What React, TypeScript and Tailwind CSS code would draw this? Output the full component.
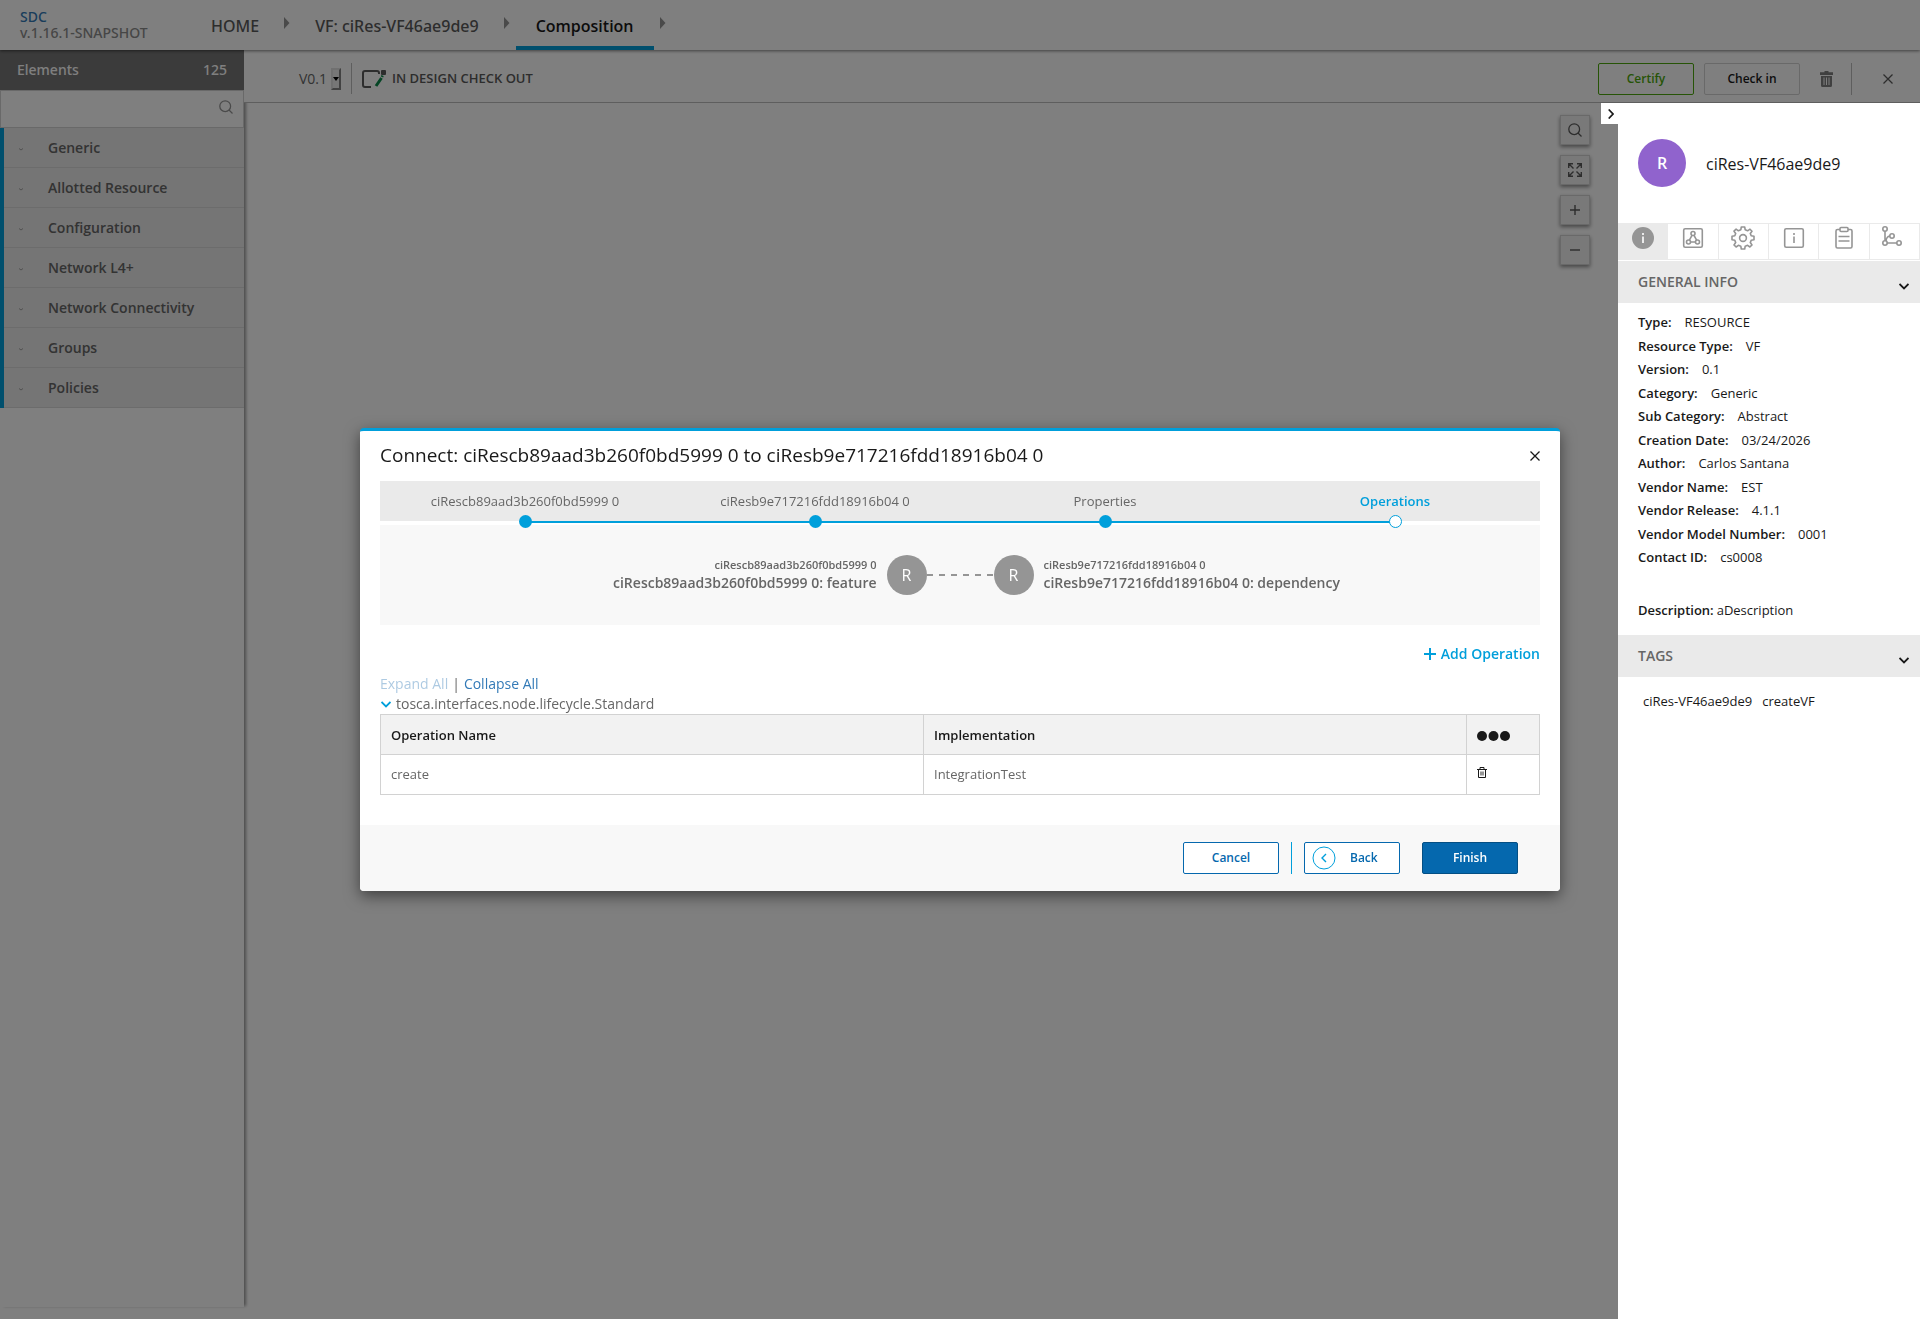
import React from "react";

const categories = ["Generic", "Allotted Resource", "Configuration", "Network L4+", "Network Connectivity", "Groups", "Policies"];

const info: [string, string][] = [
  ["Type:", "RESOURCE"],
  ["Resource Type:", "VF"],
  ["Version:", "0.1"],
  ["Category:", "Generic"],
  ["Sub Category:", "Abstract"],
  ["Creation Date:", "03/24/2026"],
  ["Author:", "Carlos Santana"],
  ["Vendor Name:", "EST"],
  ["Vendor Release:", "4.1.1"],
  ["Vendor Model Number:", "0001"],
  ["Contact ID:", "cs0008"],
];

function Arrow() {
  return (
    <svg width="6" height="12" viewBox="0 0 6 12" className="mb-1" aria-hidden="true">
      <path d="M0 0L5.5 6L0 12Z" fill="#959595" />
    </svg>
  );
}

function SearchIcon({ size }: { size: number }) {
  return (
    <svg width={size} height={size} viewBox="0 0 14 14" fill="none" stroke="currentColor" strokeWidth="1.3" aria-hidden="true">
      <circle cx="6.2" cy="6.2" r="5.4" />
      <path d="M10 10L13.5 13.5" />
    </svg>
  );
}

function Cross({ size }: { size: number }) {
  return (
    <svg width={size} height={size} viewBox="0 0 10 10" fill="none" stroke="currentColor" strokeWidth="1.3" aria-hidden="true">
      <path d="M0.5 0.5L9.5 9.5M9.5 0.5L0.5 9.5" />
    </svg>
  );
}

function Header() {
  return (
    <header className="relative z-10 flex h-[50px] items-stretch bg-white shadow-[0_1px_3px_rgba(0,0,0,0.5)]">
      <div className="flex w-[211px] flex-col justify-center pl-5 font-['Noto_Sans',sans-serif] text-sm leading-4 font-medium">
        <a href="#sdc" className="block text-[#337ab7]">SDC</a>
        <span className="text-[#8c8c8c]">v.1.16.1-SNAPSHOT</span>
      </div>
      <nav className="flex items-center font-['Noto_Sans',sans-serif] text-base font-medium text-[#5a5a5a]" aria-label="Breadcrumb">
        <a href="#home" className="mr-[25px] pt-0.5">HOME</a>
        <Arrow />
        <a href="#vf" className="mr-[25px] ml-[25px] pt-0.5">VF: ciRes-VF46ae9de9</a>
        <Arrow />
        <a href="#composition" className="mx-[6px] flex h-[50px] items-center border-b-4 border-[#009fdb] px-5 pt-[6px] font-['Open_Sans',sans-serif] font-semibold text-[#191919]">Composition</a>
        <Arrow />
      </nav>
    </header>
  );
}

function Palette() {
  return (
    <aside className="mb-3 w-[244px] shrink-0 bg-white shadow-[3px_0_3px_-1px_rgba(0,0,0,0.4)]">
      <h2 className="flex h-10 items-center justify-between bg-[#777] px-[17px] font-['Noto_Sans',sans-serif] text-sm font-medium text-white">
        <span>Elements</span>
        <span>125</span>
      </h2>
      <div className="flex h-[38px] items-center border border-[#d2d2d2] pr-[10px] text-[#959595]">
        <input type="search" aria-label="Search elements" className="h-full min-w-0 flex-1 px-3 outline-none" />
        <span className="pb-1"><SearchIcon size={14} /></span>
      </div>
      <ul className="border-l-4 border-[#009fdb]">
        {categories.map((c) => (
          <li key={c} className="h-10 border-b border-[#d8d8d8] bg-[#eaeaea]">
            <button className="flex h-full w-full items-center text-left text-sm font-semibold text-[#666]">
              <svg width="4" height="3" viewBox="0 0 4 3" className="mt-1 mr-[25px] ml-[15px]" aria-hidden="true">
                <path d="M0 0.5L2 2L4 0.5" fill="none" stroke="#a0a0a0" />
              </svg>
              {c}
            </button>
          </li>
        ))}
      </ul>
    </aside>
  );
}

function VersionBar() {
  return (
    <div className="flex h-[53px] items-center border-b border-[#bcbcbc] bg-white pt-[5px] pr-[27px] pl-[55px]">
      <label htmlFor="version" className="text-sm text-[#666]">V0.1</label>
      <div className="relative ml-[4px] h-[22px] w-[10px]">
        <select id="version" className="h-full w-full appearance-none border-2 border-t-[#e0e0e0] border-r-[#858585] border-b-[#858585] border-l-[#e0e0e0] bg-[#efefef]">
          <option aria-label="V0.1" />
        </select>
        <svg width="6" height="4" viewBox="0 0 6 4" className="pointer-events-none absolute top-[9px] left-[2px]" aria-hidden="true">
          <path d="M0 0H6L3 4Z" />
        </svg>
      </div>
      <div className="mr-[10px] ml-[10px] h-[31px] w-px bg-[#bcbcbc]" />
      <svg width="24" height="18" viewBox="0 0 24 18" fill="none" aria-hidden="true">
        <path d="M17 4V3Q17 1 15 1H3Q1 1 1 3V15Q1 17 3 17H9" stroke="#5a5a5a" strokeWidth="2" />
        <rect x="19" y="0" width="5" height="5" rx="1" fill="#5a5a5a" />
        <path d="M19.5 8L14 16" stroke="#0a8a4a" strokeWidth="3" />
        <path d="M20.5 5.5L20 7" stroke="#0a8a4a" strokeWidth="2.5" />
      </svg>
      <span className="ml-[6px] text-[13px] font-semibold text-[#5a5a5a]">IN DESIGN CHECK OUT</span>
      <div className="ml-auto flex items-center text-xs font-semibold">
        <button className="h-8 w-24 rounded-xs border border-[#4ca90c] text-[#4ca90c]">Certify</button>
        <button className="ml-[10px] h-8 w-24 rounded-xs border border-[#d2d2d2] text-[#191919]">Check in</button>
        <button aria-label="Delete" className="ml-5">
          <svg width="13" height="16" viewBox="0 0 13 16" fill="#808080" aria-hidden="true">
            <path d="M4.5 0H8.5V1.2H13V4H0V1.2H4.5ZM1 5H12V14.5Q12 16 10.5 16H2.5Q1 16 1 14.5Z" />
            <path d="M4 6.5V14M6.5 6.5V14M9 6.5V14" stroke="#fff" />
          </svg>
        </button>
        <div className="mr-[31px] ml-[18px] h-8 w-px bg-[#bcbcbc]" />
        <button aria-label="Close" className="text-[#5a5a5a]"><Cross size={10} /></button>
      </div>
    </div>
  );
}

function CanvasTools() {
  const box = "flex size-[30px] items-center justify-center border border-[#d2d2d2] bg-[#f2f2f2] text-[#5a5a5a] shadow-[0_2px_4px_rgba(0,0,0,0.45)]";
  return (
    <div className="flex flex-col gap-[10px]">
      <button aria-label="Search" className={box}><SearchIcon size={14} /></button>
      <button aria-label="Fit to screen" className={box}>
        <svg width="14" height="14" viewBox="0 0 14 14" fill="none" stroke="currentColor" strokeWidth="1.4" aria-hidden="true">
          <path d="M0.7 5V0.7H5M9 0.7H13.3V5M13.3 9V13.3H9M5 13.3H0.7V9M1 1L5.5 5.5M13 1L8.5 5.5M13 13L8.5 8.5M1 13L5.5 8.5" />
        </svg>
      </button>
      <button aria-label="Zoom in" className={box}>
        <svg width="10" height="10" viewBox="0 0 10 10" stroke="currentColor" strokeWidth="1.4" aria-hidden="true"><path d="M0 5H10M5 0V10" /></svg>
      </button>
      <button aria-label="Zoom out" className={box}>
        <svg width="10" height="10" viewBox="0 0 10 10" stroke="currentColor" strokeWidth="1.4" aria-hidden="true"><path d="M0 5H10" /></svg>
      </button>
    </div>
  );
}

function Chevron({ className }: { className: string }) {
  return (
    <svg width="10" height="7" viewBox="0 0 10 7" fill="none" stroke="currentColor" strokeWidth="1.8" className={className} aria-hidden="true">
      <path d="M0.5 1L5 5.5L9.5 1" />
    </svg>
  );
}

const tabIcons: { name: string; art: React.ReactNode }[] = [
  {
    name: "General info",
    art: (
      <>
        <circle cx="12" cy="12" r="11" fill="#959595" stroke="none" />
        <path d="M12 10.5V17M12 7V9" stroke="#eaeaea" strokeWidth="2" />
      </>
    ),
  },
  {
    name: "Composition",
    art: (
      <>
        <rect x="2.7" y="2.7" width="18.6" height="18.6" rx="1.5" />
        <circle cx="12" cy="7.5" r="2" />
        <circle cx="7.5" cy="16" r="2" />
        <circle cx="16.5" cy="16" r="2" />
        <path d="M11 9.3L8.4 14.2M13 9.3L15.6 14.2M9.5 16H14.5" />
      </>
    ),
  },
  {
    name: "Inputs",
    art: (
      <>
        <path d="M10.3 1H13.7L14.2 3.8L16.6 4.8L19 3.2L21 5.2L19.3 7.5L20.2 9.8L23 10.3V13.7L20.2 14.2L19.3 16.6L21 18.9L18.9 21L16.6 19.3L14.2 20.2L13.7 23H10.3L9.8 20.2L7.4 19.3L5.1 21L3 18.9L4.7 16.6L3.8 14.2L1 13.7V10.3L3.8 9.8L4.7 7.5L3 5.2L5.1 3.2L7.4 4.8L9.8 3.8Z" strokeLinejoin="round" />
        <circle cx="12" cy="12" r="3.4" />
      </>
    ),
  },
  {
    name: "Information artifacts",
    art: (
      <>
        <rect x="2.7" y="2.7" width="18.6" height="18.6" rx="1.5" />
        <path d="M12 10.5V17M12 7V9" />
      </>
    ),
  },
  {
    name: "Deployment artifacts",
    art: (
      <>
        <path d="M8 3.5H5.5Q4 3.5 4 5V20.5Q4 22 5.5 22H18.5Q20 22 20 20.5V5Q20 3.5 18.5 3.5H16" />
        <rect x="8" y="1.5" width="8" height="4" rx="1" />
        <path d="M6.5 10.5H17.5M6.5 15H17.5" />
      </>
    ),
  },
  {
    name: "Relations",
    art: (
      <>
        <circle cx="3" cy="3" r="2.2" />
        <circle cx="3" cy="17" r="2.2" />
        <circle cx="10" cy="10" r="2.2" />
        <circle cx="17" cy="17" r="2.2" />
        <path d="M3 5.2V14.8M5.2 17H14.8M4 15Q4.5 10.5 7.8 10" />
      </>
    ),
  },
];

function SectionTitle({ children }: { children: string }) {
  return (
    <h3 className="bg-[#eaeaea]">
      <button className="flex h-[42px] w-full items-center justify-between pr-[11px] pl-5 text-sm font-semibold text-[#666]">
        {children}
        <Chevron className="mt-2 text-[#191919]" />
      </button>
    </h3>
  );
}

function DetailsPanel() {
  return (
    <div className="relative z-20 w-[302px] shrink-0 bg-white text-[13px] text-[#191919]">
      <button aria-label="Collapse panel" className="absolute top-0 right-full flex h-[21px] w-[17px] items-center justify-center bg-white pl-[2px]">
        <svg width="6" height="10" viewBox="0 0 6 10" fill="none" stroke="#191919" strokeWidth="1.7" aria-hidden="true"><path d="M0.7 0.5L5 5L0.7 9.5" /></svg>
      </button>
      <div className="flex h-[120px] items-center gap-5 pl-5">
        <span className="flex size-12 items-center justify-center rounded-full bg-[#9063cd] text-base font-semibold text-white">R</span>
        <h2 className="pt-0.5 text-base">ciRes-VF46ae9de9</h2>
      </div>
      <div className="mb-px grid h-[37px] grid-cols-6 border-t border-b border-[#eaeaea]" role="tablist">
        {tabIcons.map((t, i) => (
          <button key={t.name} role="tab" aria-selected={i === 0} aria-label={t.name} className={i === 0 ? "flex justify-center border-r border-[#eaeaea] bg-[#eaeaea] pt-[2px]" : "flex justify-center border-r border-[#eaeaea] pt-[2px]"}>
            <svg width="24" height="24" viewBox="0 0 24 24" fill="none" stroke="#959595" strokeWidth="1.6" aria-hidden="true">{t.art}</svg>
          </button>
        ))}
      </div>
      <SectionTitle>GENERAL INFO</SectionTitle>
      <dl className="px-5 pt-2">
        <div className="grid h-[259px] auto-rows-fr">
          {info.map(([k, v]) => (
            <div key={k} className="flex items-center gap-[13px]">
              <dt className="font-semibold">{k}</dt>
              <dd>{v}</dd>
            </div>
          ))}
        </div>
        <div className="mt-[31px] mb-[14px] flex h-5 items-center gap-[3px]">
          <dt className="font-semibold">Description:</dt>
          <dd>aDescription</dd>
        </div>
      </dl>
      <SectionTitle>TAGS</SectionTitle>
      <div className="flex gap-[10px] px-[25px] pt-[15px]">
        <span>ciRes-VF46ae9de9</span>
        <span>createVF</span>
      </div>
    </div>
  );
}

function Steps() {
  const steps = ["ciRescb89aad3b260f0bd5999 0", "ciResb9e717216fdd18916b04 0", "Properties", "Operations"];
  return (
    <ol className="grid grid-cols-4 border-b-4 border-white bg-[#eaeaea] text-[13px]">
      {steps.map((s, i) => (
        <li key={s} className={i === 3 ? "relative h-10 pt-[11px] text-center font-semibold text-[#009fdb]" : "relative h-10 pt-[11px] text-center text-[#666]"}>
          {s}
          {i < 3 && <span className="absolute top-10 left-1/2 h-[2px] w-full bg-[#009fdb]" />}
          <span className={i === 3 ? "absolute top-[34px] left-1/2 z-10 -ml-[6px] size-[13px] rounded-full border border-[#009fdb] bg-white" : "absolute top-[34px] left-1/2 z-10 -ml-[6px] size-[13px] rounded-full bg-[#009fdb]"} />
        </li>
      ))}
    </ol>
  );
}

function Endpoint() {
  return <span className="flex size-10 items-center justify-center rounded-full bg-[#959595] text-base text-white">R</span>;
}

function ConnectDialog() {
  return (
    <div className="fixed inset-0 z-30 flex items-center justify-center">
      <section role="dialog" aria-labelledby="dialog-title" className="w-[1200px] rounded-sm border-t-3 border-[#009fdb] bg-white text-sm text-[#666] shadow-[0_5px_15px_rgba(0,0,0,0.5)]">
        <div className="px-5">
          <div className="flex h-[50px] items-center justify-between">
            <h1 id="dialog-title" className="text-[19px] text-[#191919]">Connect: ciRescb89aad3b260f0bd5999 0 to ciResb9e717216fdd18916b04 0</h1>
            <button aria-label="Close dialog" className="text-[#191919]"><Cross size={10} /></button>
          </div>
          <Steps />
          <div className="grid h-[100px] grid-cols-[1fr_auto_1fr] items-center gap-[10px] bg-[#f8f8f8] font-semibold">
            <div className="text-right">
              <div className="text-[11px] leading-4">ciRescb89aad3b260f0bd5999 0</div>
              <div className="leading-5">ciRescb89aad3b260f0bd5999 0: feature</div>
            </div>
            <div className="flex items-center font-normal">
              <Endpoint />
              <svg width="67" height="2" viewBox="0 0 67 2" aria-hidden="true"><path d="M0 1H67" stroke="#959595" strokeWidth="2" strokeDasharray="6 6" /></svg>
              <Endpoint />
            </div>
            <div>
              <div className="text-[11px] leading-4">ciResb9e717216fdd18916b04 0</div>
              <div className="leading-5">ciResb9e717216fdd18916b04 0: dependency</div>
            </div>
          </div>
          <div className="flex justify-end pt-[19px]">
            <button className="flex items-center gap-[5px] leading-5 font-semibold text-[#009fdb]">
              <svg width="12" height="12" viewBox="0 0 12 12" stroke="currentColor" strokeWidth="2" aria-hidden="true"><path d="M0 6H12M6 0V12" /></svg>
              Add Operation
            </button>
          </div>
          <div className="mt-[10px] flex gap-1 leading-5">
            <a href="#expand" className="text-[#337ab7]/40">Expand All</a>
            <span>|</span>
            <a href="#collapse" className="text-[#337ab7]">Collapse All</a>
          </div>
          <button className="flex items-center gap-[5px] pl-px leading-5">
            <Chevron className="text-[#009fdb]" />
            tosca.interfaces.node.lifecycle.Standard
          </button>
          <table className="w-full table-fixed border-collapse text-left text-[13px] [&_td]:border [&_td]:border-[#d2d2d2] [&_td]:px-[10px] [&_th]:border [&_th]:border-[#d2d2d2] [&_th]:px-[10px] [&_th]:pt-0.5">
            <thead>
              <tr className="h-10 bg-[#f2f2f2] text-[#191919]">
                <th className="font-semibold">Operation Name</th>
                <th className="font-semibold">Implementation</th>
                <th className="w-[73px]" aria-label="Actions">
                  <svg width="34" height="10" viewBox="0 0 34 10" fill="#191919" aria-hidden="true"><circle cx="5" cy="5" r="5" /><circle cx="16.5" cy="5" r="5" /><circle cx="28" cy="5" r="5" /></svg>
                </th>
              </tr>
            </thead>
            <tbody>
              <tr className="h-10">
                <td>create</td>
                <td>IntegrationTest</td>
                <td>
                  <button aria-label="Delete operation" className="mb-1 block">
                    <svg width="10" height="11" viewBox="0 0 10 11" fill="none" stroke="#191919" aria-hidden="true"><path d="M0 2.5H10M3 2V0.5H7V2M1.5 3V10.5H8.5V3" /><rect x="3" y="4.5" width="4" height="4" fill="#959595" stroke="none" /></svg>
                  </button>
                </td>
              </tr>
            </tbody>
          </table>
        </div>
        <footer className="mt-[30px] flex h-[66px] items-center justify-end rounded-b-sm bg-[#f8f8f8] pr-[42px] text-xs font-semibold text-[#0568ae]">
          <button className="h-8 w-24 rounded-xs border border-[#0568ae] bg-white">Cancel</button>
          <div className="mx-3 h-8 w-px bg-[#009fdb]" />
          <button className="flex h-8 w-24 items-center gap-[14px] rounded-xs border border-[#0568ae] bg-white pl-[7px]">
            <svg width="24" height="24" viewBox="0 0 24 24" fill="none" stroke="#009fdb" aria-hidden="true"><circle cx="12" cy="12" r="11" /><path d="M14 8L10 12L14 16" strokeWidth="1.4" /></svg>
            Back
          </button>
          <button className="ml-[22px] h-8 w-24 rounded-xs border border-[#044f84] bg-[#0568ae] text-white">Finish</button>
        </footer>
      </section>
    </div>
  );
}

export default function App() {
  return (
    <div className="flex h-screen flex-col overflow-hidden bg-white font-['Open_Sans',sans-serif]">
      <Header />
      <div className="flex min-h-0 flex-1">
        <Palette />
        <main className="flex min-w-0 flex-1 flex-col">
          <VersionBar />
          <div className="flex min-h-0 flex-1">
            <div className="flex min-w-0 flex-1 items-start justify-end pt-3 pr-[28px]">
              <CanvasTools />
            </div>
            <DetailsPanel />
          </div>
        </main>
      </div>
      <div className="fixed inset-0 z-10 bg-black/50" />
      <ConnectDialog />
    </div>
  );
}
